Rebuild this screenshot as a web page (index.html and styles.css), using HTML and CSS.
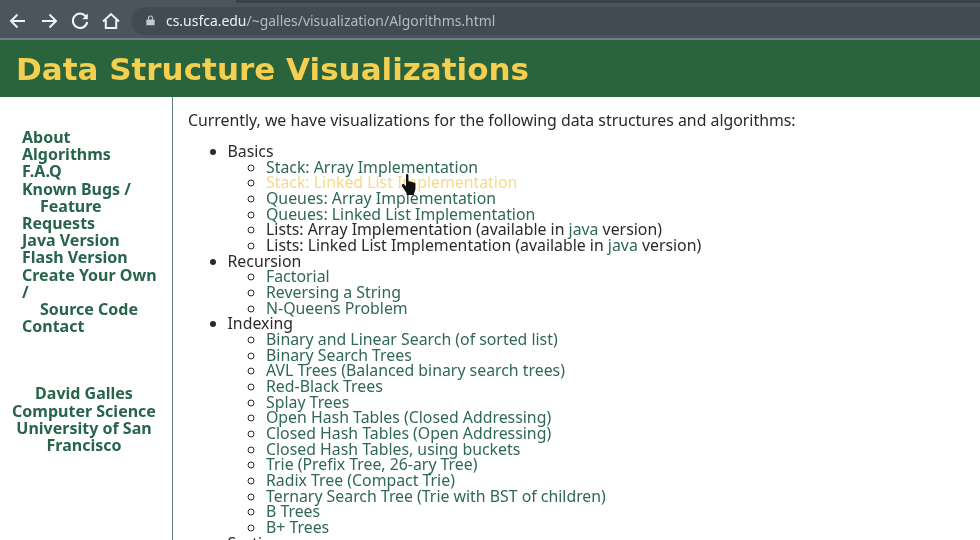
FILE: index.html
```html
<!DOCTYPE html>
<html lang="en">
<head>
<meta charset="utf-8">
<title>Data Structure Visualizations</title>
<link rel="stylesheet" href="styles.css">
</head>
<body>
<div class="frame">
  <div class="tabstrip"><div class="tab-edge"></div><div class="tab-dark"></div></div>
  <div class="toolbar">
    <svg class="nav" viewBox="0 0 22 22"><path d="M18 11H4M10.5 4.5 4 11l6.5 6.5"/></svg>
    <svg class="nav" viewBox="0 0 22 22"><path d="M4 11h14M11.5 4.5 18 11l-6.5 6.5"/></svg>
    <svg class="nav" viewBox="0 0 22 22"><path d="M17.5 7.5A7.2 7.2 0 1 0 18.2 12"/><path class="solid" d="M18.8 3.6v5.6h-5.6z"/></svg>
    <svg class="nav" viewBox="0 0 22 22"><path d="M3 11.5 11 4l8 7.5M5.8 10v8h10.4v-8"/></svg>
    <div class="omnibox">
      <svg class="lock" viewBox="0 0 10 12"><path d="M1 5h8a.6.6 0 0 1 .6.6v5.2a.6.6 0 0 1-.6.6H1a.6.6 0 0 1-.6-.6V5.6A.6.6 0 0 1 1 5z"/><path class="shackle" d="M2.8 5V3.2a2.2 2.2 0 0 1 4.4 0V5"/></svg>
      <span class="url"><span class="host">cs.usfca.edu</span>/~galles/visualization/Algorithms.html</span>
    </div>
  </div>
  <header class="banner"><h1>Data Structure Visualizations</h1></header>
  <div class="page">
    <nav class="side">
      <ul class="menu">
        <li><a href="#">About</a></li>
        <li><a href="#">Algorithms</a></li>
        <li><a href="#">F.A.Q</a></li>
        <li><a href="#">Known Bugs /<span class="hang">Feature</span>Requests</a></li>
        <li><a href="#">Java Version</a></li>
        <li><a href="#">Flash Version</a></li>
        <li><a href="#">Create Your Own<br>/<span class="hang">Source Code</span></a></li>
        <li><a href="#">Contact</a></li>
      </ul>
      <div class="credit"><a href="#">David Galles</a><br><a href="#">Computer Science</a><br><a href="#">University of San Francisco</a></div>
    </nav>
    <main class="content">
      <p class="intro">Currently, we have visualizations for the following data structures and algorithms:</p>
      <ul class="top">
        <li>Basics
          <ul>
            <li><a href="#">Stack: Array Implementation</a></li>
            <li><a href="#" class="hover">Stack: Linked List Implementation</a></li>
            <li><a href="#">Queues: Array Implementation</a></li>
            <li><a href="#">Queues: Linked List Implementation</a></li>
            <li>Lists: Array Implementation (available in <a href="#">java</a> version)</li>
            <li>Lists: Linked List Implementation (available in <a href="#">java</a> version)</li>
          </ul>
        </li>
        <li>Recursion
          <ul>
            <li><a href="#">Factorial</a></li>
            <li><a href="#">Reversing a String</a></li>
            <li><a href="#">N-Queens Problem</a></li>
          </ul>
        </li>
        <li>Indexing
          <ul>
            <li><a href="#">Binary and Linear Search (of sorted list)</a></li>
            <li><a href="#">Binary Search Trees</a></li>
            <li><a href="#">AVL Trees (Balanced binary search trees)</a></li>
            <li><a href="#">Red-Black Trees</a></li>
            <li><a href="#">Splay Trees</a></li>
            <li><a href="#">Open Hash Tables (Closed Addressing)</a></li>
            <li><a href="#">Closed Hash Tables (Open Addressing)</a></li>
            <li><a href="#">Closed Hash Tables, using buckets</a></li>
            <li><a href="#">Trie (Prefix Tree, 26-ary Tree)</a></li>
            <li><a href="#">Radix Tree (Compact Trie)</a></li>
            <li><a href="#">Ternary Search Tree (Trie with BST of children)</a></li>
            <li><a href="#">B Trees</a></li>
            <li><a href="#">B+ Trees</a></li>
          </ul>
        </li>
        <li>Sorting</li>
      </ul>
      <svg class="cursor" viewBox="0 0 16 24"><path d="M5 2.2c0-1.600 2.400-1.600 2.400 0v6.400c1-.5 2-.4 2.500.3 1-.4 2-.2 2.400.6 1-.2 2 .3 2.100 1.500v4.500c0 2-.6 3.200-1.300 4.500v2H5.500v-2C4 17.500 2.500 15.500 1 13.300c-1-1.600.8-3 2.200-1.700L5 13.200z"/></svg>
    </main>
  </div>
</div>
</body>
</html>
```
FILE: styles.css
```css
* { box-sizing: border-box; }
html, body { margin: 0; padding: 0; background: #fff; }
.frame { width: 980px; height: 540px; overflow: hidden; display: flex; flex-direction: column; filter: blur(0.4px); font-family: "Noto Sans", sans-serif; }
.tabstrip { height: 3px; display: flex; background: #4b555e; flex: none; }
.tab-edge { width: 236px; background: #4b555e; }
.tab-dark { flex: 1; background: #3a4249; }
.toolbar { height: 37px; flex: none; background: #4b555e; border-bottom: 2px solid #6d7f88; display: flex; align-items: center; padding-left: 7px; gap: 9px; }
.nav { width: 22px; height: 22px; flex: none; fill: none; stroke: #f1f3f4; stroke-width: 2; }
.nav .solid { fill: #f1f3f4; stroke: none; }
.omnibox { flex: 1; height: 28px; background: #414b53; border-radius: 14px 0 0 14px; display: flex; align-items: center; padding-left: 15px; gap: 11px; }
.lock { width: 9px; height: 11px; flex: none; fill: #c5cace; }
.lock .shackle { fill: none; stroke: #c5cace; stroke-width: 1.2; }
.url { font-size: 13.950px; color: #b4bbc0; white-space: nowrap; }
.host { color: #eef0f1; }
.banner { height: 57px; flex: none; background: #2a643d; display: flex; align-items: center; padding-left: 16px; }
.banner h1 { margin: 0; font: bold 31px "DejaVu Sans", sans-serif; color: #f4cf50; white-space: nowrap; }
.page { flex: 1; display: flex; min-height: 0; }
.side { width: 173px; flex: none; border-right: 1px solid #5c8080; padding-top: 32px; font-size: 16px; font-weight: 700; line-height: 17.200px; }
.side a { color: #27644a; text-decoration: none; }
.menu { list-style: none; margin: 0; padding: 0 10px 0 22px; }
.hang { display: block; padding-left: 18px; }
.credit { margin-top: 50px; padding: 0 12px 0 8px; text-align: center; }
.content { position: relative; flex: 1; padding: 15px 0 0 15px; font-size: 15.850px; line-height: 15.670px; color: #2a2a2a; }
.content a { color: #2f6853; text-decoration: none; }
.content a.hover { color: #f7d98a; }
.intro { margin: 0 0 15px; line-height: 17px; }
.top { margin: 0; padding-left: 39.500px; }
.top ul { margin: 0; padding-left: 38.500px; }
.top ul li { list-style-type: circle; }
.cursor { position: absolute; left: 228px; top: 76px; width: 16px; height: 24px; fill: #111; }
```
